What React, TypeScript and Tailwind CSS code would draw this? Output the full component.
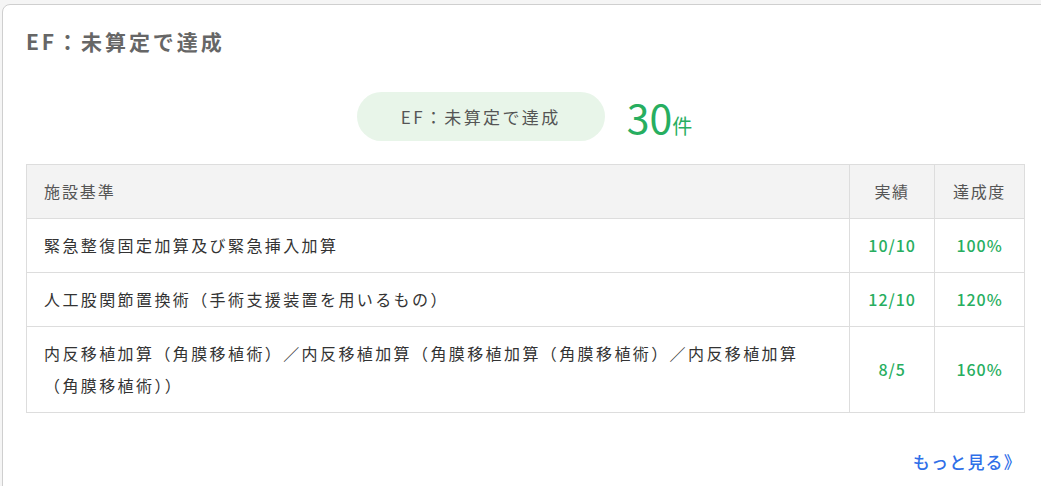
import React from "react";

const rows = [
  { name: "緊急整復固定加算及び緊急挿入加算", actual: "10/10", rate: "100%" },
  { name: "人工股関節置換術（手術支援装置を用いるもの）", actual: "12/10", rate: "120%" },
  {
    name: "内反移植加算（角膜移植術）／内反移植加算（角膜移植加算（角膜移植術）／内反移植加算（角膜移植術））",
    actual: "8/5",
    rate: "160%",
  },
];

export default function App() {
  return (
    <div
      className="w-[1041px] h-[486px] overflow-hidden bg-[#f5f5f5] pl-[2px] pt-[4px]"
      style={{ fontFamily: '"Noto Sans CJK JP", "Noto Sans", sans-serif' }}
    >
      <div className="w-[1047px] h-[520px] bg-white border border-[#cfcfcf] rounded-lg px-[23px] pt-[21px]">
        <h2 className="text-[21px] leading-[30px] font-bold text-[#666] tracking-[0.14em]">EF：未算定で達成</h2>
        <div className="flex items-center justify-center mt-[36px] gap-[22px] pr-[2px]">
          <div className="h-[49px] w-[248px] rounded-full bg-[#e8f5e9] flex items-center justify-center text-[17px] text-[#555] tracking-[0.14em]">
            EF：未算定で達成
          </div>
          <div className="flex items-baseline text-[#27ae60]">
            <span className="text-[41px] leading-none">30</span>
            <span className="text-[20px] leading-none">件</span>
          </div>
        </div>
        <table className="mt-[23px] w-[999px] border-collapse text-[16px] text-[#333]">
          <colgroup>
            <col className="w-[824px]" />
            <col className="w-[85px]" />
            <col className="w-[90px]" />
          </colgroup>
          <thead>
            <tr className="bg-[#f3f3f3]">
              <th className="border border-[#ddd] text-left font-normal px-[17px] pt-[10px] pb-[11px] leading-[32px] tracking-[0.12em] text-[#555]">施設基準</th>
              <th className="border border-[#ddd] text-center font-normal pt-[10px] pb-[11px] leading-[32px] tracking-[0.1em] text-[#555]">実績</th>
              <th className="border border-[#ddd] text-center font-normal pt-[10px] pb-[11px] leading-[32px] tracking-[0.1em] text-[#555]">達成度</th>
            </tr>
          </thead>
          <tbody>
            {rows.map((r) => (
              <tr key={r.name}>
                <td className="border border-[#ddd] pl-[17px] pr-[20px] pt-[10px] pb-[11px] leading-[32px] tracking-[2.4px]">{r.name}</td>
                <td className="border border-[#ddd] text-center pt-[10px] pb-[11px] leading-[32px] text-[#27ae60] font-medium tracking-[0.06em]">{r.actual}</td>
                <td className="border border-[#ddd] text-center pt-[10px] pb-[11px] leading-[32px] text-[#27ae60] font-medium tracking-[0.06em]">{r.rate}</td>
              </tr>
            ))}
          </tbody>
        </table>
        <div className="flex justify-end mt-[36px] pr-[3px]">
          <a className="text-[17px] font-medium text-[#2f6fe8] tracking-[0.07em]">もっと見る》</a>
        </div>
      </div>
    </div>
  );
}
